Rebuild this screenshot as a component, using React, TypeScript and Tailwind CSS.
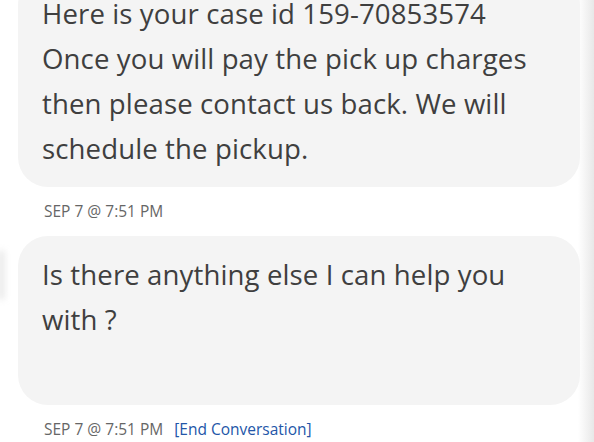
import React from 'react';

const messages = [
  {
    lines: ['Here is your case id 159-70853574', 'Once you will pay the pick up charges then please contact us back. We will schedule the pickup.'],
    time: 'SEP 7 @ 7:51 PM',
    end: false,
    extra: false,
  },
  {
    lines: ['Is there anything else I can help you with ?'],
    time: 'SEP 7 @ 7:51 PM',
    end: true,
    extra: true,
  },
];

const App: React.FC = () => {
  return (
    <div className="relative w-[594px] h-[442px] overflow-hidden bg-white" style={{ fontFamily: '"Open Sans", "Noto Sans", sans-serif' }}>
      {/* right edge shade */}
      <div className="absolute top-0 right-0 h-full w-[16px] bg-gradient-to-r from-white to-[#e8e8e8]" />
      <div className="absolute -left-[3px] top-[250px] h-[50px] w-[8px] bg-[#ebebeb] blur-[3px] rounded-full" />

      <div className="relative -mt-[25px] pl-[18px] pr-[14px] flex flex-col">
        {messages.map((m, i) => (
          <div key={i} className="flex flex-col">
            <div className="bg-[#f4f4f4] rounded-[30px] pl-[24px] pr-[20px] py-[16px] text-[27.6px] tracking-[0.1px] leading-[45px] text-[#3f3f3f]">
              {m.lines.map((l, j) => (
                <div key={j}>{l}</div>
              ))}
              {m.extra && <div className="h-[47px]" />}
            </div>
            <div className="flex items-center gap-[11px] pl-[26px] h-[49px] text-[15.5px] text-[#666]">
              <span>{m.time}</span>
              {m.end && <span className="text-[#2356a8]">[End Conversation]</span>}
            </div>
          </div>
        ))}
      </div>
    </div>
  );
};

export default App;
